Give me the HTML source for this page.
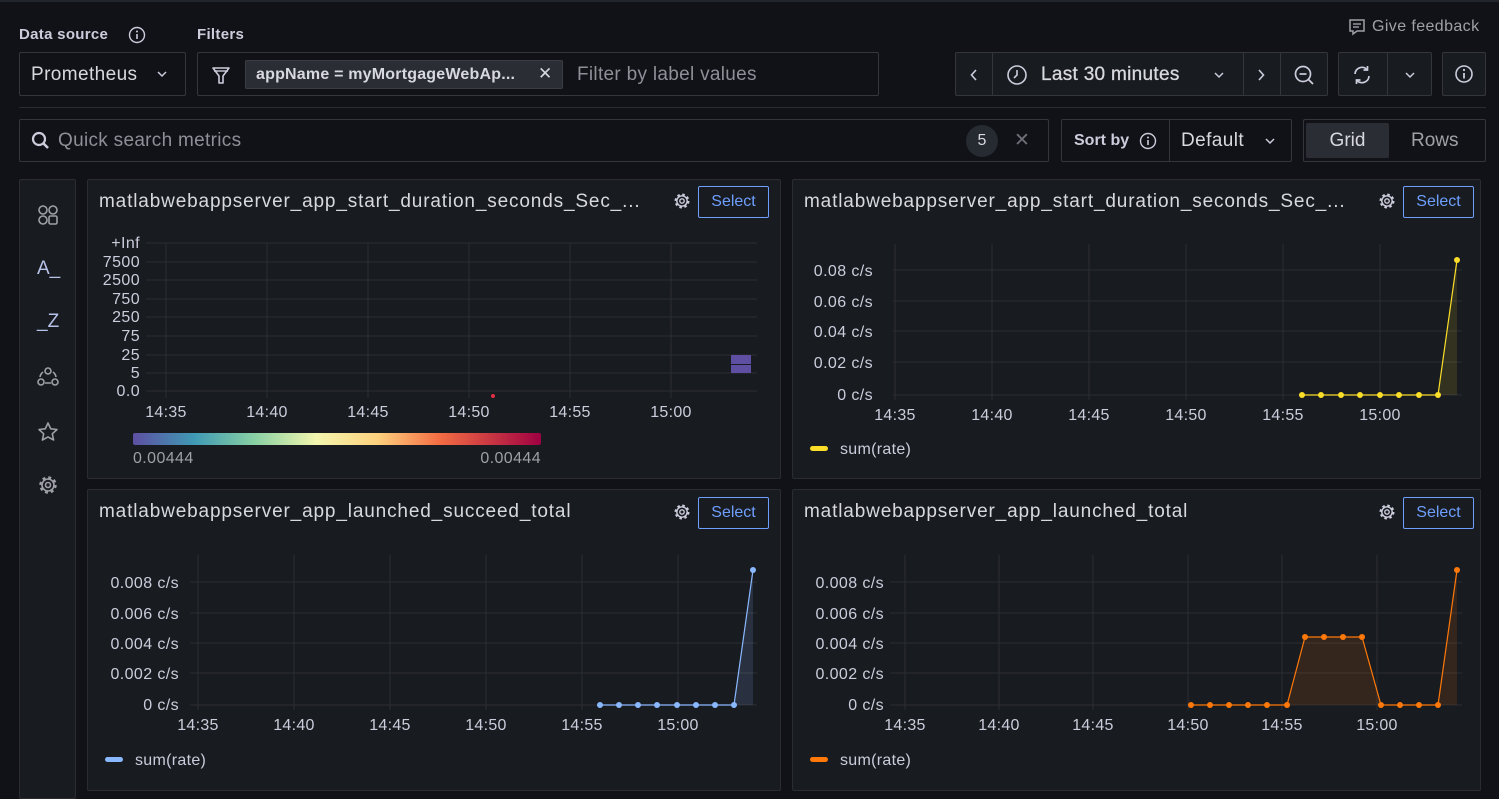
<!DOCTYPE html>
<html><head><meta charset="utf-8"><style>
*{box-sizing:border-box;margin:0;padding:0}
body{width:1499px;height:795px;background:#111217;font-family:"Liberation Sans",sans-serif;color:#ccccdc;position:relative;overflow:hidden}
.a{position:absolute}
.box{position:absolute;border:1px solid #34363c;border-radius:2px;background:#111217}
.lbl{font-size:15px;font-weight:bold;color:#ccccdc;letter-spacing:0.3px}
.panel{position:absolute;background:#181b1f;border:1px solid #2a2c31;border-radius:2px}
.ptitle{position:absolute;left:11px;top:11px;font-size:19px;color:#d8d9e0;letter-spacing:0.85px;white-space:nowrap}
.sel{position:absolute;width:71px;height:32px;border:1px solid #6e9fff;border-radius:2px;color:#6e9fff;font-size:16px;text-align:center;line-height:30px}
svg text{font-family:"Liberation Sans",sans-serif}
</style></head><body>
<div class="a" style="left:0;top:0;width:1499px;height:2px;background:#22252b"></div>
<div class="a lbl" style="left:19px;top:26px">Data source</div>
<svg class="a" style="left:128px;top:26px" width="18" height="18" viewBox="0 0 18 18"><circle cx="9" cy="9" r="7.5" fill="none" stroke="#ccccdc" stroke-width="1.4"/><line x1="9" y1="8" x2="9" y2="13" stroke="#ccccdc" stroke-width="1.6"/><circle cx="9" cy="5.5" r="1" fill="#ccccdc"/></svg>
<div class="a lbl" style="left:197px;top:26px">Filters</div>
<div class="box" style="left:19px;top:52px;width:167px;height:44px"><span class="a" style="left:11px;top:11px;font-size:19px;color:#d8d9e0;letter-spacing:0.4px">Prometheus</span><svg class="a" style="left:137px;top:17px" width="10" height="8" viewBox="0 0 10 8"><path d="M1 2l4 4 4-4" fill="none" stroke="#ccccdc" stroke-width="1.5"/></svg></div>
<div class="box" style="left:197px;top:52px;width:682px;height:44px">
<svg class="a" style="left:12px;top:11px" width="22" height="22" viewBox="0 0 22 22"><path d="M3 4h16l-6 8v7h-4v-7z" fill="none" stroke="#ccccdc" stroke-width="1.6" stroke-linejoin="round"/><line x1="4" y1="7" x2="18" y2="7" stroke="#ccccdc" stroke-width="1.4"/></svg>
<div class="a" style="left:47px;top:7px;width:318px;height:29px;background:#2a2d33;border:1px solid #3a3d44;border-radius:2px"><span class="a" style="left:10px;top:5px;font-size:16px;font-weight:bold;color:#d8d9e0;letter-spacing:0.2px">appName = myMortgageWebAp...</span><span class="a" style="left:292px;top:3px;font-size:17px;color:#d8d9e0">✕</span></div>
<span class="a" style="left:379px;top:11px;font-size:19px;color:#8e8f98;letter-spacing:0.3px">Filter by label values</span></div>
<svg class="a" style="left:1348px;top:18px" width="18" height="18" viewBox="0 0 18 18"><path d="M2 2h14v11H9l-4 3v-3H2z" fill="none" stroke="#9fa0a8" stroke-width="1.5"/><line x1="5" y1="6" x2="13" y2="6" stroke="#9fa0a8" stroke-width="1.4"/><line x1="5" y1="9" x2="11" y2="9" stroke="#9fa0a8" stroke-width="1.4"/></svg>
<div class="a" style="left:1372px;top:18px;font-size:16px;color:#9fa0a8;letter-spacing:0.4px">Give feedback</div>
<div class="a" style="left:955px;top:52px;width:373px;height:44px;background:#181b1f;border:1px solid #34363c;border-radius:2px">
<svg class="a" style="left:14px;top:16px" width="8" height="12" viewBox="0 0 8 12"><path d="M6 1L1.5 6 6 11" fill="none" stroke="#ccccdc" stroke-width="1.6"/></svg>
<div class="a" style="left:36px;top:0;width:1px;height:42px;background:#34363c"></div>
<svg class="a" style="left:50px;top:11px" width="22" height="22" viewBox="0 0 22 22"><circle cx="11" cy="11" r="9" fill="none" stroke="#ccccdc" stroke-width="1.6"/><path d="M11 6v5l-3 3" fill="none" stroke="#ccccdc" stroke-width="1.6"/></svg>
<span class="a" style="left:85px;top:11px;font-size:19px;color:#d8d9e0;letter-spacing:0.3px;-webkit-text-stroke:0.3px #d8d9e0">Last 30 minutes</span>
<svg class="a" style="left:258px;top:18px" width="10" height="8" viewBox="0 0 10 8"><path d="M1 2l4 4 4-4" fill="none" stroke="#ccccdc" stroke-width="1.5"/></svg>
<div class="a" style="left:287px;top:0;width:1px;height:42px;background:#34363c"></div>
<svg class="a" style="left:301px;top:16px" width="8" height="12" viewBox="0 0 8 12"><path d="M2 1l4.5 5L2 11" fill="none" stroke="#ccccdc" stroke-width="1.6"/></svg>
<div class="a" style="left:324px;top:0;width:1px;height:42px;background:#34363c"></div>
<svg class="a" style="left:337px;top:11px" width="22" height="22" viewBox="0 0 22 22"><circle cx="10" cy="10" r="7.5" fill="none" stroke="#ccccdc" stroke-width="1.7"/><line x1="6.5" y1="10" x2="13.5" y2="10" stroke="#ccccdc" stroke-width="1.7"/><line x1="15.5" y1="15.5" x2="20" y2="20" stroke="#ccccdc" stroke-width="1.8"/></svg></div>
<div class="a" style="left:1338px;top:52px;width:94px;height:44px;background:#181b1f;border:1px solid #34363c;border-radius:2px">
<svg class="a" style="left:12px;top:11px" width="22" height="22" viewBox="0 0 22 22"><path d="M4 10a7 7 0 0 1 12-4.5M18 12a7 7 0 0 1-12 4.5" fill="none" stroke="#ccccdc" stroke-width="1.7"/><path d="M16.5 2v4h-4M5.5 20v-4h4" fill="none" stroke="#ccccdc" stroke-width="1.7"/></svg>
<div class="a" style="left:48px;top:0;width:1px;height:42px;background:#34363c"></div>
<svg class="a" style="left:66px;top:18px" width="10" height="8" viewBox="0 0 10 8"><path d="M1 2l4 4 4-4" fill="none" stroke="#ccccdc" stroke-width="1.5"/></svg></div>
<div class="a" style="left:1442px;top:52px;width:44px;height:44px;background:#181b1f;border:1px solid #34363c;border-radius:2px">
<svg class="a" style="left:11px;top:11px" width="20" height="20" viewBox="0 0 20 20"><circle cx="10" cy="10" r="8" fill="none" stroke="#ccccdc" stroke-width="1.6"/><line x1="10" y1="9" x2="10" y2="14.5" stroke="#ccccdc" stroke-width="1.8"/><circle cx="10" cy="6" r="1.1" fill="#ccccdc"/></svg></div>
<div class="a" style="left:19px;top:107px;width:1467px;height:1px;background:#2a2c31"></div>
<div class="box" style="left:19px;top:119px;width:1030px;height:43px">
<svg class="a" style="left:11px;top:11px" width="20" height="20" viewBox="0 0 20 20"><circle cx="8" cy="8" r="6" fill="none" stroke="#ccccdc" stroke-width="2.2"/><line x1="12.5" y1="12.5" x2="17" y2="17" stroke="#ccccdc" stroke-width="2.6"/></svg>
<span class="a" style="left:38px;top:10px;font-size:19px;color:#8e8f98;letter-spacing:0.3px">Quick search metrics</span>
<div class="a" style="left:946px;top:5px;width:32px;height:32px;border-radius:16px;background:#262a31;text-align:center;line-height:32px;font-size:16px;color:#d8d9e0">5</div>
<span class="a" style="left:994px;top:9px;font-size:19px;color:#6e6f78">✕</span></div>
<div class="box" style="left:1061px;top:119px;width:231px;height:43px">
<span class="a" style="left:12px;top:12px;font-size:16px;font-weight:bold;color:#ccccdc">Sort by</span>
<svg class="a" style="left:77px;top:12px" width="18" height="18" viewBox="0 0 18 18"><circle cx="9" cy="9" r="7.5" fill="none" stroke="#ccccdc" stroke-width="1.4"/><line x1="9" y1="8" x2="9" y2="13" stroke="#ccccdc" stroke-width="1.6"/><circle cx="9" cy="5.5" r="1" fill="#ccccdc"/></svg>
<div class="a" style="left:107px;top:0;width:1px;height:41px;background:#34363c"></div>
<span class="a" style="left:119px;top:10px;font-size:19px;color:#d8d9e0;letter-spacing:0.4px">Default</span>
<svg class="a" style="left:203px;top:17px" width="10" height="8" viewBox="0 0 10 8"><path d="M1 2l4 4 4-4" fill="none" stroke="#ccccdc" stroke-width="1.5"/></svg></div>
<div class="box" style="left:1303px;top:119px;width:183px;height:43px">
<div class="a" style="left:2px;top:3px;width:83px;height:35px;background:#2a2d33;border-radius:2px;text-align:center;line-height:35px;font-size:19px;color:#d8d9e0">Grid</div>
<span class="a" style="left:107px;top:10px;font-size:19px;color:#9fa0a8">Rows</span></div>
<div class="a" style="left:19px;top:179px;width:57px;height:620px;background:#181b1f;border:1px solid #2a2c31;border-radius:2px">
<svg class="a" style="left:17px;top:24px" width="22" height="22" viewBox="0 0 22 22" fill="none" stroke="#9fa0a8" stroke-width="1.6"><circle cx="6" cy="6" r="4"/><circle cx="16" cy="6" r="4"/><circle cx="6" cy="16" r="4"/><rect x="12" y="12" width="8" height="8" rx="1.5"/></svg>
<div class="a" style="left:17px;top:78px;font-size:19px;color:#b6c2e8">A_</div>
<div class="a" style="left:17px;top:131px;font-size:19px;color:#b6c2e8">_Z</div>
<svg class="a" style="left:17px;top:186px" width="22" height="22" viewBox="0 0 22 22" fill="none" stroke="#9fa0a8" stroke-width="1.6"><circle cx="11" cy="5" r="3"/><circle cx="4" cy="16" r="3"/><circle cx="18" cy="16" r="3"/><path d="M3 11a8 8 0 0 1 3-5M19 11a8 8 0 0 0-3-5M8 17h6"/></svg>
<svg class="a" style="left:17px;top:241px" width="22" height="22" viewBox="0 0 22 22"><path d="M11 2l2.7 5.8 6.3.7-4.7 4.3 1.3 6.2L11 15.9 5.4 19l1.3-6.2L2 8.5l6.3-.7z" fill="none" stroke="#9fa0a8" stroke-width="1.6" stroke-linejoin="round"/></svg>
<svg class="a" style="left:17px;top:294px" width="22" height="22" viewBox="0 0 22 22" fill="none" stroke="#9fa0a8"><circle cx="11" cy="11" r="7" stroke-width="3.5" stroke-dasharray="2.75 2.75"/><circle cx="11" cy="11" r="6" stroke-width="1.6"/><circle cx="11" cy="11" r="2.5" stroke-width="1.6"/></svg></div>
<div class="panel" style="left:87px;top:179px;width:694px;height:300px"><div class="ptitle">matlabwebappserver_app_start_duration_seconds_Sec_...</div><div class="sel" style="left:610px;top:6px">Select</div></div>
<div class="panel" style="left:792px;top:179px;width:689px;height:300px"><div class="ptitle">matlabwebappserver_app_start_duration_seconds_Sec_...</div><div class="sel" style="left:610px;top:6px">Select</div></div>
<div class="panel" style="left:87px;top:489px;width:694px;height:302px"><div class="ptitle">matlabwebappserver_app_launched_succeed_total</div><div class="sel" style="left:610px;top:7px">Select</div></div>
<div class="panel" style="left:792px;top:489px;width:689px;height:302px"><div class="ptitle">matlabwebappserver_app_launched_total</div><div class="sel" style="left:610px;top:7px">Select</div></div>
<svg class="a" style="left:0;top:0" width="1499" height="795">
<defs><linearGradient id="cg"><stop offset="0" stop-color="#5e4fa2"/><stop offset=".15" stop-color="#3f9ab4"/><stop offset=".3" stop-color="#8ad1a4"/><stop offset=".45" stop-color="#f3f6ae"/><stop offset=".6" stop-color="#fdd17e"/><stop offset=".75" stop-color="#f46d43"/><stop offset="1" stop-color="#9e0142"/></linearGradient>
<g id="gear" fill="none" stroke="#ccccdc"><circle r="6" stroke-width="3" stroke-dasharray="2.36 2.36"/><circle r="5.2" stroke-width="1.4"/><circle r="2.2" stroke-width="1.4"/></g></defs>
<use href="#gear" x="682" y="201"/><use href="#gear" x="1387" y="201"/><use href="#gear" x="682" y="512"/><use href="#gear" x="1387" y="512"/>
<g stroke="#2c2e33" stroke-width="1">
<path d="M146 243H757M146 262H757M146 280H757M146 299H757M146 317H757M146 336H757M146 355H757M146 373H757M146 391H757"/>
<path d="M166 243V398M267 243V398M368 243V398M469 243V398M570 243V398M671 243V398"/>
<path d="M893 270H1462M893 301H1462M893 331H1462M893 362H1462M893 395H1462"/>
<path d="M895 244V400M992 244V400M1089 244V400M1186 244V400M1283 244V400M1380 244V400"/>
<path d="M190 582H757M190 613H757M190 643H757M190 673H757M190 705H757"/>
<path d="M198 555V710M294 555V710M390 555V710M486 555V710M582 555V710M678 555V710"/>
<path d="M890 582H1462M890 613H1462M890 643H1462M890 673H1462M890 705H1462"/>
<path d="M905 555V710M999 555V710M1093 555V710M1188 555V710M1282 555V710M1377 555V710"/>
</g>
<g fill="#ccccdc" font-size="16" text-anchor="end" letter-spacing="0.4">
<text x="140" y="248">+Inf</text><text x="140" y="267">7500</text><text x="140" y="285">2500</text><text x="140" y="304">750</text><text x="140" y="322">250</text><text x="140" y="341">75</text><text x="140" y="360">25</text><text x="140" y="378">5</text><text x="140" y="396">0.0</text>
<text x="873" y="276">0.08 c/s</text><text x="873" y="307">0.06 c/s</text><text x="873" y="337">0.04 c/s</text><text x="873" y="368">0.02 c/s</text><text x="873" y="400">0 c/s</text>
<text x="179" y="588">0.008 c/s</text><text x="179" y="619">0.006 c/s</text><text x="179" y="649">0.004 c/s</text><text x="179" y="679">0.002 c/s</text><text x="179" y="710">0 c/s</text>
<text x="884" y="588">0.008 c/s</text><text x="884" y="619">0.006 c/s</text><text x="884" y="649">0.004 c/s</text><text x="884" y="679">0.002 c/s</text><text x="884" y="710">0 c/s</text>
</g>
<g fill="#ccccdc" font-size="16" text-anchor="middle" letter-spacing="0.3">
<text x="166" y="417">14:35</text><text x="267" y="417">14:40</text><text x="368" y="417">14:45</text><text x="469" y="417">14:50</text><text x="570" y="417">14:55</text><text x="671" y="417">15:00</text>
<text x="895" y="420">14:35</text><text x="992" y="420">14:40</text><text x="1089" y="420">14:45</text><text x="1186" y="420">14:50</text><text x="1283" y="420">14:55</text><text x="1380" y="420">15:00</text>
<text x="198" y="730">14:35</text><text x="294" y="730">14:40</text><text x="390" y="730">14:45</text><text x="486" y="730">14:50</text><text x="582" y="730">14:55</text><text x="678" y="730">15:00</text>
<text x="905" y="730">14:35</text><text x="999" y="730">14:40</text><text x="1093" y="730">14:45</text><text x="1188" y="730">14:50</text><text x="1282" y="730">14:55</text><text x="1377" y="730">15:00</text>
</g>
<rect x="731" y="355" width="20" height="9" fill="#5e4fa2"/><rect x="731" y="365" width="20" height="8" fill="#5e4fa2"/>
<circle cx="493" cy="396" r="2" fill="#e02f44"/>
<rect x="133" y="433" width="408" height="12" rx="2" fill="url(#cg)"/>
<text x="133" y="463" fill="#9fa0a8" font-size="16" letter-spacing="0.4">0.00444</text><text x="541" y="463" fill="#9fa0a8" font-size="16" text-anchor="end" letter-spacing="0.4">0.00444</text>
<path d="M1438 395L1457 260V395Z" fill="#fade2a" opacity=".12"/>
<polyline points="1302,395 1438,395 1457,260" fill="none" stroke="#fade2a" stroke-width="1.2"/>
<g fill="#fade2a"><circle cx="1302" cy="395" r="3"/><circle cx="1321" cy="395" r="3"/><circle cx="1341" cy="395" r="3"/><circle cx="1360" cy="395" r="3"/><circle cx="1380" cy="395" r="3"/><circle cx="1399" cy="395" r="3"/><circle cx="1419" cy="395" r="3"/><circle cx="1438" cy="395" r="3"/><circle cx="1457" cy="260" r="3"/></g>
<rect x="810" y="446" width="18" height="5" rx="2.5" fill="#fade2a"/><text x="840" y="454" fill="#ccccdc" font-size="16" letter-spacing="0.3">sum(rate)</text>
<path d="M734 705L753 570V705Z" fill="#8ab8ff" opacity=".15"/>
<polyline points="600,705 734,705 753,570" fill="none" stroke="#8ab8ff" stroke-width="1.2"/>
<g fill="#8ab8ff"><circle cx="600" cy="705" r="3"/><circle cx="619" cy="705" r="3"/><circle cx="638" cy="705" r="3"/><circle cx="657" cy="705" r="3"/><circle cx="677" cy="705" r="3"/><circle cx="696" cy="705" r="3"/><circle cx="715" cy="705" r="3"/><circle cx="734" cy="705" r="3"/><circle cx="753" cy="570" r="3"/></g>
<rect x="105" y="757" width="18" height="5" rx="2.5" fill="#8ab8ff"/><text x="135" y="765" fill="#ccccdc" font-size="16" letter-spacing="0.3">sum(rate)</text>
<path d="M1287 705L1305 637H1362L1381 705ZM1438 705L1457 570V705Z" fill="#ff780a" opacity=".12"/>
<polyline points="1191,705 1287,705 1305,637 1362,637 1381,705 1438,705 1457,570" fill="none" stroke="#ff780a" stroke-width="1.2"/>
<g fill="#ff780a"><circle cx="1191" cy="705" r="3"/><circle cx="1210" cy="705" r="3"/><circle cx="1229" cy="705" r="3"/><circle cx="1248" cy="705" r="3"/><circle cx="1267" cy="705" r="3"/><circle cx="1287" cy="705" r="3"/><circle cx="1305" cy="637" r="3"/><circle cx="1324" cy="637" r="3"/><circle cx="1343" cy="637" r="3"/><circle cx="1362" cy="637" r="3"/><circle cx="1381" cy="705" r="3"/><circle cx="1400" cy="705" r="3"/><circle cx="1419" cy="705" r="3"/><circle cx="1438" cy="705" r="3"/><circle cx="1457" cy="570" r="3"/></g>
<rect x="810" y="757" width="18" height="5" rx="2.5" fill="#ff780a"/><text x="840" y="765" fill="#ccccdc" font-size="16" letter-spacing="0.3">sum(rate)</text>
</svg>
</body></html>
